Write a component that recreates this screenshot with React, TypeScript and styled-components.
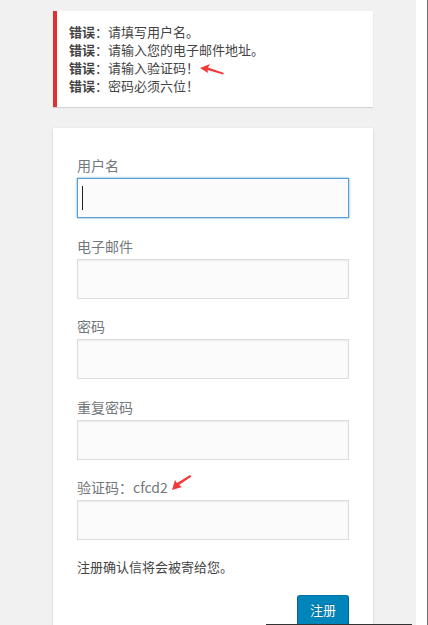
import styled, { createGlobalStyle } from 'styled-components'

const GlobalStyle = createGlobalStyle`
  html, body {
    margin: 0;
    padding: 0;
    height: 100%;
    overflow: hidden;
  }
  body {
    background: #f1f1f1;
    font-family: "Noto Sans CJK SC", "Noto Sans", "Liberation Sans", sans-serif;
    font-size: 13px;
    color: #444;
  }
`

const Frame = styled.div`
  display: flex;
  height: 625px;
  position: relative;
`

const Main = styled.div`
  width: 416px;
  background: #f1f1f1;
  padding: 11px 0 0 53px;
  box-sizing: border-box;
  position: relative;
`

const SideStrip = styled.div`
  flex: 1;
  background: #fff;
  border-right: 1px solid #6e6e6e;
`

const Column = styled.div`
  width: 320px;
`

const ErrorBox = styled.div`
  background: #fff;
  border-left: 4px solid #dc3232;
  box-shadow: 0 1px 1px 0 rgba(0, 0, 0, 0.12);
  padding: 12px;
  margin-bottom: 21px;
  line-height: 18px;
`

const ErrorLine = styled.div`
  white-space: nowrap;
  strong {
    font-weight: 700;
  }
`

const Form = styled.form`
  background: #fff;
  box-shadow: 0 1px 3px rgba(0, 0, 0, 0.13);
  padding: 27px 24px 40px;
  height: 520px;
  box-sizing: border-box;
`

const Label = styled.label`
  display: block;
  font-size: 14px;
  line-height: 21px;
  color: #72777c;
`

const Input = styled.div<{ $focused?: boolean }>`
  height: 40px;
  box-sizing: border-box;
  margin: 2px 0 17.5px;
  background: #fbfbfb;
  border: 1px solid ${p => (p.$focused ? '#5b9dd9' : '#ddd')};
  box-shadow: ${p => (p.$focused ? '0 0 2px rgba(30, 140, 190, 0.8)' : 'inset 0 1px 2px rgba(0, 0, 0, 0.07)')};
  padding: 7px 4px;
  display: flex;
`

const Caret = styled.span`
  width: 1px;
  height: 24px;
  background: #222;
`

const Note = styled.p`
  margin: 0;
  line-height: 18px;
  color: #444;
`

const Submit = styled.div`
  display: flex;
  justify-content: flex-end;
  margin-top: 19px;
`

const Button = styled.button`
  height: 30px;
  padding: 0 12px;
  font-family: inherit;
  font-size: 13px;
  line-height: 28px;
  color: #fff;
  background: #0085ba;
  border: 1px solid;
  border-color: #0073aa #006799 #006799;
  border-radius: 3px;
  box-shadow: 0 1px 0 #006799;
  text-shadow: 0 -1px 1px #006799;
`

const Arrow = styled.svg<{ $x: number; $y: number }>`
  position: absolute;
  left: ${p => p.$x}px;
  top: ${p => p.$y}px;
`

const BottomRule = styled.div`
  position: absolute;
  left: 266px;
  bottom: 0;
  width: 146px;
  height: 1px;
  background: #333;
`

const errors = ['请填写用户名。', '请输入您的电子邮件地址。', '请输入验证码！', '密码必须六位！']

const fields = ['用户名', '电子邮件', '密码', '重复密码']

export default function App() {
  return (
    <>
      <GlobalStyle />
      <Frame>
        <Main>
          <Column>
            <ErrorBox>
              {errors.map(e => (
                <ErrorLine key={e}>
                  <strong>错误</strong>：{e}
                </ErrorLine>
              ))}
            </ErrorBox>
            <Form>
              {fields.map((f, i) => (
                <div key={f}>
                  <Label>{f}</Label>
                  <Input $focused={i === 0}>{i === 0 && <Caret />}</Input>
                </div>
              ))}
              <Label>验证码：cfcd2</Label>
              <Input />
              <Note>注册确认信将会被寄给您。</Note>
              <Submit>
                <Button type="button">注册</Button>
              </Submit>
            </Form>
          </Column>
          <Arrow $x={198} $y={63} width="28" height="13" viewBox="0 0 28 13">
            <path d="M2 5 L12 1 L10 4.5 L26 10 L25 11.5 L9.5 7 L10 10 Z" fill="#f03a3a" />
          </Arrow>
          <Arrow $x={169} $y={474} width="24" height="19" viewBox="0 0 24 19">
            <path d="M3 16 L6 6 L8 9 L21 1 L22.5 2.5 L10 11 L13 13 Z" fill="#f03a3a" />
          </Arrow>
          <BottomRule />
        </Main>
        <SideStrip />
      </Frame>
    </>
  )
}
